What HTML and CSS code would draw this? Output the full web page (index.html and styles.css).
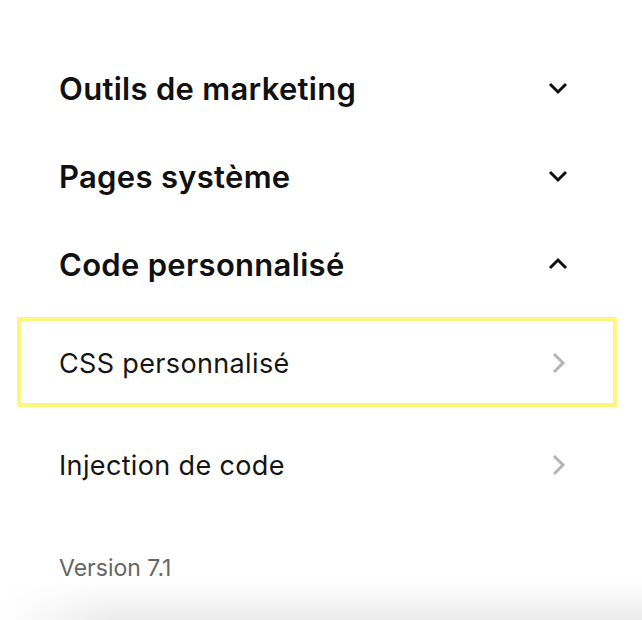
FILE: index.html
```html
<!DOCTYPE html>
<html lang="fr">
<head>
<meta charset="utf-8">
<link rel="stylesheet" href="styles.css">
</head>
<body>
<div class="panel">
  <div class="section">
    <span class="section-title">Outils de marketing</span>
    <svg class="chev" width="20" height="14" viewBox="0 0 20 14"><polyline points="2,3 10,11 18,3" fill="none" stroke="#111" stroke-width="3"/></svg>
  </div>
  <div class="section">
    <span class="section-title">Pages système</span>
    <svg class="chev" width="20" height="14" viewBox="0 0 20 14"><polyline points="2,3 10,11 18,3" fill="none" stroke="#111" stroke-width="3"/></svg>
  </div>
  <div class="section">
    <span class="section-title">Code personnalisé</span>
    <svg class="chev" width="20" height="14" viewBox="0 0 20 14"><polyline points="2,11 10,3 18,11" fill="none" stroke="#111" stroke-width="3"/></svg>
  </div>
  <div class="item item-selected">
    <span class="item-title">CSS personnalisé</span>
    <svg class="arrow" width="15" height="22" viewBox="0 0 15 22"><polyline points="3,2 12,11 3,20" fill="none" stroke="#b5b5b5" stroke-width="3"/></svg>
  </div>
  <div class="item">
    <span class="item-title">Injection de code</span>
    <svg class="arrow" width="15" height="22" viewBox="0 0 15 22"><polyline points="3,2 12,11 3,20" fill="none" stroke="#b5b5b5" stroke-width="3"/></svg>
  </div>
  <div class="version">Version 7.1</div>
</div>
<div class="shade"></div>
</body>
</html>
```
FILE: styles.css
```css
html, body {
  margin: 0;
  height: 100%;
  overflow: hidden;
  background: #fff;
}
body {
  font-family: Inter, "Noto Sans", sans-serif;
  color: #111;
  position: relative;
}
.panel {
  padding-top: 44px;
  display: flex;
  flex-direction: column;
}
.section {
  height: 88px;
  display: flex;
  align-items: center;
  justify-content: space-between;
  padding: 0 74px 0 59px;
}
.section-title {
  font-size: 31px;
  font-weight: 600;
  letter-spacing: 0.3px;
}
.item {
  margin: 0 25px 0 17px;
  height: 80px;
  border: 4px solid transparent;
  display: flex;
  align-items: center;
  justify-content: space-between;
  padding: 2px 47px 0 38px;
}
.item-selected {
  margin-top: 9px;
  border-color: #fcf77c;
}
.item + .item {
  margin-top: 12px;
}
.item-title {
  font-size: 27px;
  font-weight: 400;
  letter-spacing: 0.35px;
  color: #151515;
}
.version {
  margin-top: 44px;
  padding-left: 59px;
  font-size: 23px;
  line-height: 30px;
  color: #666;
}
.shade {
  position: absolute;
  left: 0;
  right: 0;
  bottom: 0;
  height: 40px;
  background: linear-gradient(to bottom, rgba(0, 0, 0, 0), rgba(0, 0, 0, 0.075));
  -webkit-mask-image: linear-gradient(to right, transparent 0, #000 110px);
  mask-image: linear-gradient(to right, transparent 0, #000 110px);
}
```
